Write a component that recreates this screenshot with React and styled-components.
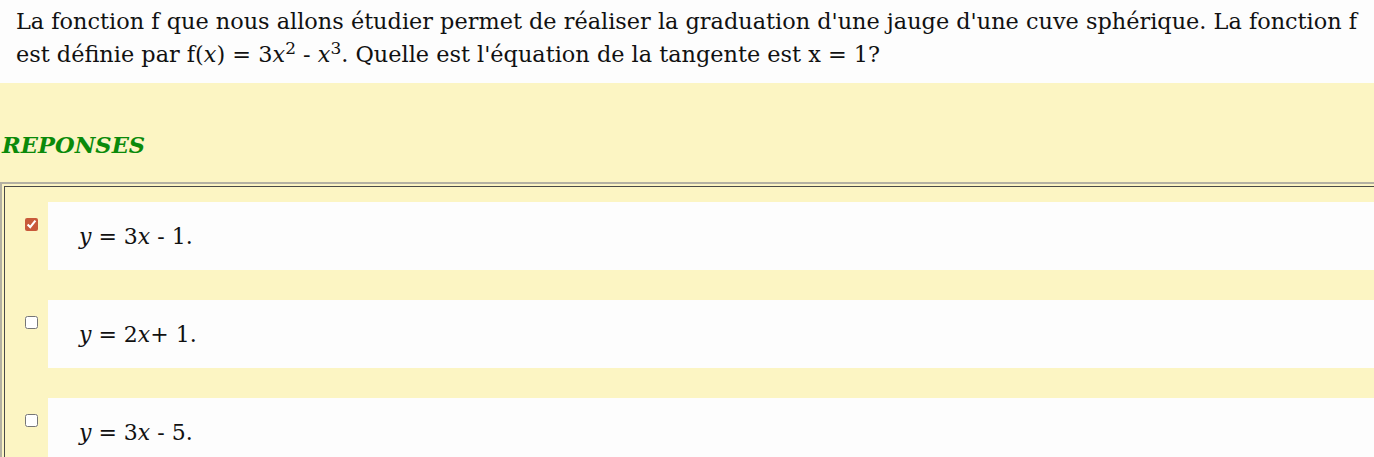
import React from "react";
import styled, { createGlobalStyle } from "styled-components";

const GlobalStyle = createGlobalStyle`
  html, body {
    margin: 0;
    padding: 0;
    background: #fdfdfd;
    overflow: hidden;
  }
  body {
    font-family: "DejaVu Serif", serif;
    color: #111;
  }
`;

const answers = [
  { id: 1, coef: "3", rest: " - 1.", checked: true },
  { id: 2, coef: "2", rest: "+ 1.", checked: false },
  { id: 3, coef: "3", rest: " - 5.", checked: false },
];

const App = () => (
  <>
    <GlobalStyle />
    <Question>
      La fonction f que nous allons étudier permet de réaliser la graduation d'une jauge d'une cuve
      sphérique. La fonction f est définie par f(<i>x</i>) = 3<i>x</i>
      <sup>2</sup> - <i>x</i>
      <sup>3</sup>. Quelle est l'équation de la tangente est x = 1?
    </Question>
    <Section>
      <Heading>REPONSES</Heading>
      <Frame>
        <Inner>
          {answers.map((a) => (
            <Row key={a.id}>
              <Check type="checkbox" defaultChecked={a.checked} />
              <Card>
                <i>y</i> = {a.coef}
                <i>x</i>
                {a.rest}
              </Card>
            </Row>
          ))}
        </Inner>
      </Frame>
    </Section>
  </>
);

export default App;

const Question = styled.p`
  margin: 0;
  padding: 5px 0 12px 16px;
  font-size: 22.4px;
  line-height: 33px;

  sup {
    font-size: 17px;
    line-height: 0;
    vertical-align: 8px;
  }
`;

const Section = styled.div`
  background: #fcf5c3;
  padding-top: 49px;
  min-height: 400px;
`;

const Heading = styled.h2`
  margin: 0 0 24px 2px;
  font-size: 22.6px;
  line-height: 26px;
  font-weight: bold;
  font-style: italic;
  color: #0a8a0a;
`;

const Frame = styled.div`
  border-top: 2px solid #b4b1a2;
  border-left: 2px solid #b4b1a2;
  padding: 2px 0 0 2px;
`;

const Inner = styled.div`
  border-top: 1px solid #4a4a48;
  border-left: 1px solid #4a4a48;
  padding: 15px 0 0 20px;
  display: flex;
  flex-direction: column;
  gap: 30px;
`;

const Row = styled.div`
  display: flex;
  align-items: flex-start;
`;

const Check = styled.input`
  width: 13px;
  height: 13px;
  margin: 16px 10px 0 0;
  accent-color: #c85a3a;
  flex: none;
`;

const Card = styled.div`
  flex: 1;
  height: 68px;
  background: #fdfdfd;
  display: flex;
  align-items: center;
  padding-left: 31px;
  font-size: 22px;
  white-space: pre;
`;
